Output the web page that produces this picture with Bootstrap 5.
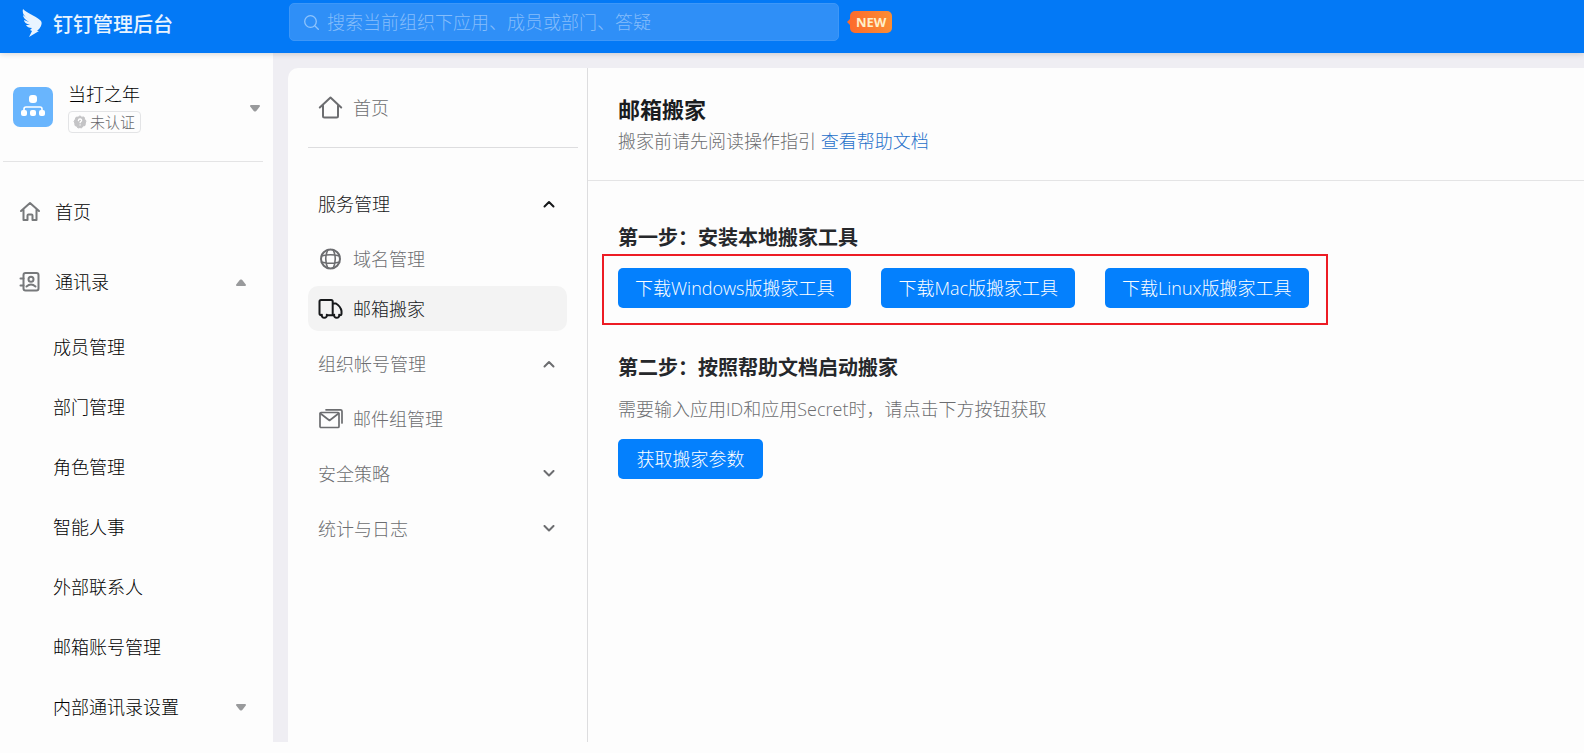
<!DOCTYPE html>
<html lang="zh-CN">
<head>
<meta charset="utf-8">
<meta name="viewport" content="width=device-width, initial-scale=1">
<title>钉钉管理后台 - 邮箱搬家</title>
<link href="https://cdn.jsdelivr.net/npm/bootstrap@5.3.0/dist/css/bootstrap.min.css" rel="stylesheet">
<style>
  :root { --panel: #fdfdfd; --brand: #0379f6; --muted: #6c6d70; --rule: #dddddf; }
  body { font: 300 18px/24px "Open Sans", "Noto Sans CJK SC", sans-serif; color: #000; background: var(--panel); }
  a { text-decoration: none; color: inherit; }
  svg { display: block; flex: none; fill: none; stroke: currentColor; stroke-linecap: round; stroke-linejoin: round; }
  h1 { font-size: 22px; line-height: 30px; font-weight: 700; color: #1a1c1f; }
  h2 { font-size: 20px; line-height: 28px; font-weight: 700; color: #26282b; }

  .topbar { height: 53px; padding: 3px 0 12px; background: var(--brand); box-shadow: 0 1px 6px rgba(0,0,0,.16); z-index: 2; }
  .logo-area { width: 289px; padding: 6px 0 0 22px; color: #e9f4ff; }
  .logo-area span { padding: 3px 0 0 11px; font-size: 20px; font-weight: 500; }
  .search { flex: 0 1 550px; height: 38px; padding: 0 14px; border-radius: 5px; background: #2f8ff7; border: 1px solid #3d97f8; color: #8fc4fc; }
  .search input { background: none; border: 0; outline: 0; padding: 0; color: #fff; font-weight: 300; }
  .search input::placeholder { color: #85bdfb; opacity: 1; }
  .new-tag { height: 22px; padding: 0 6px; margin-left: 11px; border-radius: 5px; background: linear-gradient(90deg, #fd6b2c, #fb8d34); color: #fff0c9; font: 700 13px/22px "Open Sans", sans-serif; }
  .new-tag::before { content: ""; position: absolute; left: -3px; top: 8px; border: 3px solid transparent; border-right-color: #fd6b2c; border-left: 0; }

  .shell { min-height: calc(100vh - 64px); margin-bottom: 11px; background: #efeef3; }
  .side { flex: 0 0 273px; background: var(--panel); }
  .side-nav { padding-top: 15px; }
  .org { height: 109px; margin: 0 10px 0 3px; padding: 28px 3px 0 10px; border-bottom: 1px solid #e4e4e5; }
  .org-logo { width: 40px; height: 40px; margin-top: 6px; border-radius: 7px; background: #69b5fd; color: #fff; }
  .org-text { padding-left: 15px; gap: 8px; }
  .tag-unverified { height: 22px; padding: 0 5px 0 4px; border: 1px solid #e3e4e6; border-radius: 4px; font-size: 15px; line-height: 20px; color: #66676a; gap: 3px; }
  .side-main { height: 70px; padding: 0 27px 0 19px; gap: 14px; }
  .side-sub { height: 60px; padding: 0 27px 0 53px; }
  .side-icon { color: #77797b; stroke-width: 2; }
  .tri { fill: #999a9c; stroke: #999a9c; stroke-width: 2; }

  .board { margin: 15px 0 0 15px; border-radius: 10px 0 0 0; background: var(--panel); }
  .menu { flex: 0 0 300px; padding: 0 9px 0 20px; border-right: 1px solid var(--rule); }
  .menu-home { height: 80px; padding-left: 10px; gap: 10px; border-bottom: 1px solid var(--rule); }
  .menu-list { gap: 10px; padding: 33px 11px 0 0; }
  .menu-row { height: 45px; padding: 0 12px 0 10px; border-radius: 10px; color: var(--muted); gap: 10px; }
  .menu-row.on { color: #16181a; }
  .menu-row.current { background: #f3f3f3; }
  .menu-row svg { stroke-width: 2; }
  .items { gap: 5px; }

  .page-head { height: 113px; padding: 26px 30px 0; border-bottom: 1px solid #e4e4e5; }
  .page-head h1 { margin-bottom: 5px; }
  .steps { padding: 43px 30px 0; }
  .muted { color: var(--muted); }
  .step-note { margin: 15px 0 18px; }
  .doc-link { color: #1f70ca; }
  .btn-act { --bs-btn-bg: #0480fd; --bs-btn-color: #fff; --bs-btn-hover-bg: #0070e6; --bs-btn-hover-color: #fff; min-width: 145px; height: 40px; padding: 0 17px; border: 0; border-radius: 5px; font-size: 18px; line-height: 40px; font-weight: 300; white-space: nowrap; }
  .callout { width: fit-content; margin: 2px 0 29px -16px; padding: 12px 17px 15px 14px; border: 2px solid #ed1c24; gap: 30px; }
</style>
</head>
<body>
<header class="topbar d-flex align-items-start position-relative">
  <a class="logo-area d-flex align-items-center" href="#">
    <svg width="20" height="28" viewBox="0 0 20 28" style="fill:currentColor;stroke:none"><path d="M1 0C5 4 12 6 18 11c2 2 2 3 1 6-1 2-2 3-3 4l-1 1h2L7 28l3-6-2-1 2-2c-3 0-5-1-6-3l4 0C4 15 2 13 2 11l5 2C3 11 1 8 1 6l5 4C2 7 0 4 1 0z"/></svg>
    <span>钉钉管理后台</span>
  </a>
  <form class="search d-flex align-items-center gap-2" role="search">
    <svg width="15" height="15" viewBox="0 0 15 15" stroke-width="1.3"><circle cx="6.5" cy="6.5" r="5.8"/><path d="M11 11l3.300 3.300"/></svg>
    <input class="flex-grow-1" type="search" aria-label="搜索" placeholder="搜索当前组织下应用、成员或部门、答疑">
  </form>
  <span class="new-tag position-relative mt-2">NEW</span>
</header>

<div class="shell d-flex">
  <aside class="side">
    <div class="org d-flex align-items-start">
      <div class="org-logo d-flex align-items-center justify-content-center">
        <svg width="26" height="24" viewBox="0 0 26 24"><g fill="#fff" stroke="none"><rect x="9" y="0" width="8" height="8" rx="3"/><rect x="1" y="15" width="6" height="6" rx="2"/><rect x="10" y="15" width="6" height="6" rx="2"/><rect x="19" y="15" width="6" height="6" rx="2"/></g><path d="M4 16v-2q0-2 2-2h14q2 0 2 2v2" stroke-width="1.600"/></svg>
      </div>
      <div class="org-text flex-grow-1 d-flex flex-column align-items-start">
        <span class="lh-1 pt-1">当打之年</span>
        <span class="tag-unverified d-flex align-items-center">
          <svg width="14" height="14" viewBox="0 0 14 14"><path d="M7 1l1.800 1.200L11 2l.6 2.200L13 6l-.7 2L12 10.500l-2.200.5L8.500 13 7 12.500 5 13l-1.200-1.800L2 10.500 1.800 8 1 6.500 2.200 4.500 3 2.300l2.300-.2z" fill="#c4c4c6" stroke="#c4c4c6"/><path d="M5.400 5.600q.2-1.700 1.700-1.600 1.600.1 1.500 1.500c-.1 1-1.500 1-1.500 2.200M7.100 9.800v.1" stroke="#fff" stroke-width="1.300"/></svg>未认证</span>
      </div>
      <svg class="tri mt-4" width="10" height="7" viewBox="0 0 10 7"><path d="M1 1h8L5.500 5.500h-1z"/></svg>
    </div>
    <nav class="side-nav">
      <a class="side-main d-flex align-items-center" href="#">
        <svg class="side-icon" width="22" height="22" viewBox="0 0 22 22"><path d="M2 10l9-8 9 8M4.500 8.500V19h4v-4.500q0-1 1-1h3q1 0 1 1V19h4V8.500"/></svg>首页</a>
      <a class="side-main d-flex align-items-center" href="#">
        <svg class="side-icon" width="22" height="22" viewBox="0 0 22 22"><rect x="4.500" y="2" width="15" height="17.500" rx="2"/><circle cx="12" cy="8.300" r="2.500"/><path d="M7.500 15.500q4.500-4 9 0M1.500 7.500h3M1.500 14.500h3"/></svg><span class="flex-grow-1">通讯录</span>
        <svg class="tri" width="10" height="7" viewBox="0 0 10 7"><path d="M1 6h8L5.500 1.500h-1z"/></svg></a>
      <a class="side-sub d-flex align-items-center" href="#">成员管理</a>
      <a class="side-sub d-flex align-items-center" href="#">部门管理</a>
      <a class="side-sub d-flex align-items-center" href="#">角色管理</a>
      <a class="side-sub d-flex align-items-center" href="#">智能人事</a>
      <a class="side-sub d-flex align-items-center" href="#">外部联系人</a>
      <a class="side-sub d-flex align-items-center" href="#">邮箱账号管理</a>
      <a class="side-sub d-flex align-items-center" href="#"><span class="flex-grow-1">内部通讯录设置</span>
        <svg class="tri" width="10" height="7" viewBox="0 0 10 7"><path d="M1 1h8L5.500 5.500h-1z"/></svg></a>
    </nav>
  </aside>

  <div class="board d-flex flex-grow-1">
    <nav class="menu">
      <a class="menu-home muted d-flex align-items-center" href="#">
        <svg width="25" height="24" viewBox="0 0 25 24" stroke-width="2"><path d="M1.800 11.500L12.500 1.500l10.700 10M5 9.500V20q0 1.500 1.500 1.500h12q1.500 0 1.500-1.500V9.500"/></svg>首页</a>
      <div class="menu-list d-flex flex-column">
        <a class="menu-row on d-flex align-items-center" href="#"><span class="flex-grow-1">服务管理</span>
          <svg width="12" height="8" viewBox="0 0 12 8"><path d="M1.500 6.500L6 2l4.500 4.500"/></svg></a>
        <div class="items d-flex flex-column">
          <a class="menu-row d-flex align-items-center" href="#">
            <svg width="25" height="24" viewBox="0 0 25 24"><circle cx="12.500" cy="12" r="9.500"/><path d="M10 2.500q-4.500 9.500 0 19M15 2.500q4.500 9.500 0 19M3.500 9q9-2.500 18 0M3.500 15q9 2.500 18 0" stroke-width="1.600"/></svg>域名管理</a>
          <a class="menu-row on current d-flex align-items-center" href="#" aria-current="page">
            <svg width="25" height="24" viewBox="0 0 25 24"><path d="M3.500 18.200q-2 0-2-1.700V4.500Q1.500 3 3 3h10.200q1.500 0 1.500 1.500v13.700H9M14.700 6.500h3.300q4.700 3 5.500 7.500v2.700q0 1.500-1.800 1.500M14.700 18.200h1.200"/><path d="M3.800 17.800a2.600 2.300 0 1 0 5 0M16.200 17.800a2.600 2.300 0 1 0 5 0"/></svg>邮箱搬家</a>
        </div>
        <a class="menu-row d-flex align-items-center" href="#"><span class="flex-grow-1">组织帐号管理</span>
          <svg width="12" height="8" viewBox="0 0 12 8"><path d="M1.500 6.500L6 2l4.500 4.500"/></svg></a>
        <a class="menu-row d-flex align-items-center" href="#">
          <svg width="25" height="24" viewBox="0 0 25 24" style="stroke-width:1.700"><rect x="2" y="5.500" width="19" height="15" rx="1"/><path d="M2.500 6.500l9 7 9-7M8 2.800h14.500q1.500 0 1.500 1.500V16"/></svg>邮件组管理</a>
        <a class="menu-row d-flex align-items-center" href="#"><span class="flex-grow-1">安全策略</span>
          <svg width="12" height="8" viewBox="0 0 12 8"><path d="M1.500 1L6 5.500 10.500 1"/></svg></a>
        <a class="menu-row d-flex align-items-center" href="#"><span class="flex-grow-1">统计与日志</span>
          <svg width="12" height="8" viewBox="0 0 12 8"><path d="M1.500 1L6 5.500 10.500 1"/></svg></a>
      </div>
    </nav>

    <main class="flex-grow-1">
      <div class="page-head">
        <h1>邮箱搬家</h1>
        <p class="mb-0 muted">搬家前请先阅读操作指引 <a class="doc-link" href="#">查看帮助文档</a></p>
      </div>
      <div class="steps">
        <h2 class="mb-0">第一步：安装本地搬家工具</h2>
        <div class="callout d-flex flex-wrap">
          <button class="btn btn-act" type="button">下载Windows版搬家工具</button>
          <button class="btn btn-act" type="button">下载Mac版搬家工具</button>
          <button class="btn btn-act" type="button">下载Linux版搬家工具</button>
        </div>
        <h2 class="mb-0">第二步：按照帮助文档启动搬家</h2>
        <p class="step-note muted">需要输入应用ID和应用Secret时，请点击下方按钮获取</p>
        <button class="btn btn-act" type="button">获取搬家参数</button>
      </div>
    </main>
  </div>
</div>
<script src="https://cdn.jsdelivr.net/npm/bootstrap@5.3.0/dist/js/bootstrap.bundle.min.js"></script>
</body>
</html>
